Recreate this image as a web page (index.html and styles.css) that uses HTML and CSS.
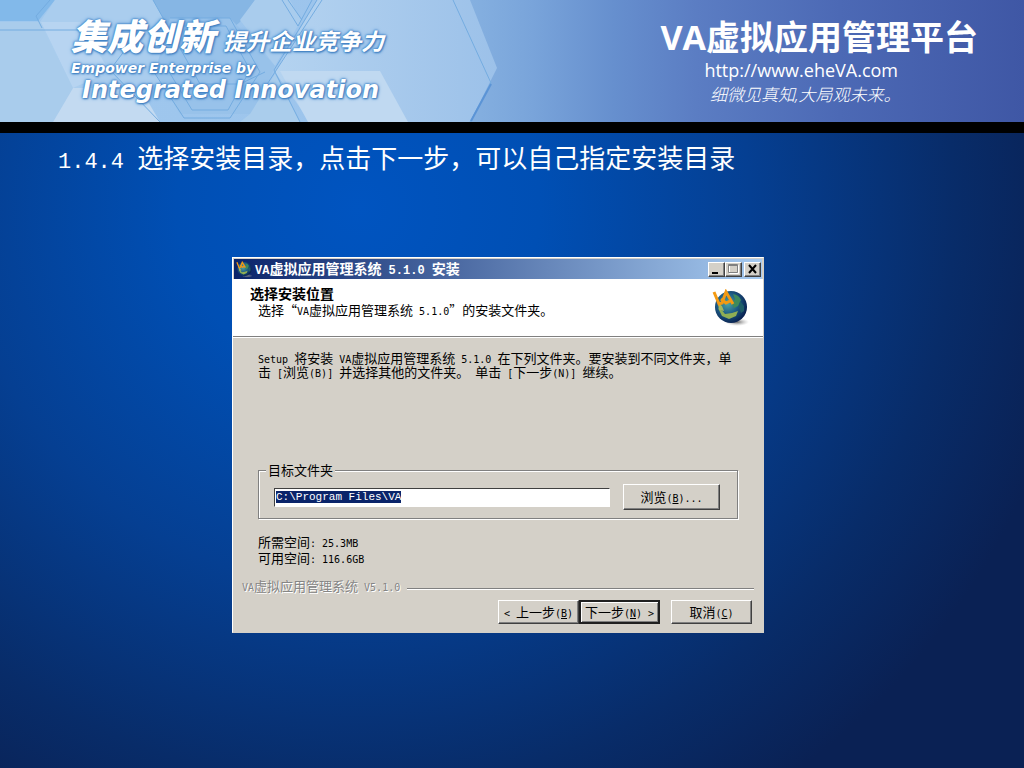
FILE: index.html
```html
<!DOCTYPE html>
<html lang="zh-CN">
<head>
  <meta charset="UTF-8">
  <title>VA虚拟应用管理平台</title>
  <link rel="stylesheet" href="styles.css">
</head>
<body>
<header>
  <svg class="hexes" width="520" height="122" viewBox="0 0 520 122" aria-hidden="true">
    <defs>
      <linearGradient id="fade" x1="0" x2="1">
        <stop offset="0" stop-color="#b4d3f0"/>
        <stop offset="1" stop-color="#9cc1e9"/>
      </linearGradient>
    </defs>
    <path d="M0 0H55L38 21H0z" fill="#82b9ea"/>
    <path d="M0 22H41L73 88L53 122H0z" fill="#a9ccec"/>
    <path d="M55 0H153L181 50L160 88H73L40 22z" fill="#aacdee"/>
    <path d="M0 22H80L110 72L73 88L41 22z" fill="#c3dbf3" opacity=".5"/>
    <path d="M153 0H255L240 22L206 50H181z" fill="#86b6e4"/>
    <path d="M255 0H290L301 20L275 66L240 20z" fill="#a9cced"/>
    <path d="M317 0H470L497 68L470 122H310L275 72z" fill="url(#fade)"/>
    <path d="M170 18H230L275 66L255 114H180L155 72z" fill="#98c2ea"/>
    <path d="M73 88H140L160 122H53z" fill="#c3daf1"/>
    <path d="M280 71H380L408 122H308z" fill="#c0d9f1"/>
    <path d="M250 114L275 74L300 122H240z" fill="#aacdec"/>
    <g fill="none" stroke="#74ace0">
      <path d="M50 0L36 16L42 28M0 30H80"/>
      <path d="M153 0L200 84M170 18H230L260 72L230 118H184L150 66"/>
      <path d="M182 26H226L250 70L228 110H192L168 70"/>
      <path d="M282 0L298 26L312 0M288 0L302 20M322 0L262 92M317 0L274 70L300 122"/>
      <path d="M140 30L110 70L160 122M200 84H240L265 72"/>
      <path d="M453 0L491 83L470 122"/>
    </g>
    <path d="M491 84L471 121" stroke="#5b94d6" stroke-width="2"/>
  </svg>
  <div class="slogan">
    <div class="cn"><span class="big">集成创新</span><span class="small">提升企业竞争力</span></div>
    <div class="en1">Empower Enterprise by</div>
    <div class="en2">Integrated Innovation</div>
  </div>
  <div class="brand">
    <div class="name">VA虚拟应用管理平台</div>
    <a href="#">http://www.eheVA.com</a>
    <div class="motto">细微见真知,大局观未来。</div>
  </div>
</header>

<main>
  <h1><span class="num">1.4.4 </span>选择安装目录，点击下一步，可以自己指定安装目录</h1>

  <div class="window">
    <div class="titlebar">
      <svg class="icon" viewBox="0 0 38 38" aria-hidden="true"><use href="#globe"/></svg>
      <span class="title"><span class="m">VA</span>虚拟应用管理系统<span class="m"> 5.1.0 </span>安装</span>
      <button class="wb" aria-label="最小化"><svg width="11" height="10"><path d="M1 8h6v2H1z"/></svg></button>
      <button class="wb" aria-label="最大化" disabled><svg width="11" height="10" fill="none"><path d="M1.5 1.5h9v8h-9z" stroke="#fff"/><path d="M.5.5h9v8h-9zM.5 1.5h9" stroke="#808080"/></svg></button>
      <button class="wb close" aria-label="关闭"><svg width="11" height="10"><path d="M2 1L9 9M9 1L2 9" stroke="#000" stroke-width="2"/></svg></button>
    </div>

    <div class="head">
      <div>
        <h2>选择安装位置</h2>
        <p>选择“<span class="m">VA</span>虚拟应用管理系统<span class="m"> 5.1.0</span>”的安装文件夹。</p>
      </div>
      <svg class="logo" width="38" height="38" viewBox="0 0 38 38" aria-hidden="true">
        <defs>
          <radialGradient id="sea" cx=".4" cy=".4" r=".65">
            <stop offset="0" stop-color="#4fa5a2"/>
            <stop offset=".5" stop-color="#1d5c86"/>
            <stop offset="1" stop-color="#071c4c"/>
          </radialGradient>
          <radialGradient id="shade">
            <stop offset="0" stop-color="#666"/>
            <stop offset="1" stop-color="#bbb" stop-opacity="0"/>
          </radialGradient>
        </defs>
        <g id="globe">
          <ellipse cx="25" cy="33" rx="12" ry="4" fill="url(#shade)"/>
          <circle cx="19" cy="18" r="16" fill="url(#sea)"/>
          <path d="M21 5q6 1 8 6l-3 6-4 2-2-4 3-5z" fill="#3d8a5c"/>
          <path d="M6 19q4 2 7 6l7-1 6-2-2 5-7 3-7-3z" fill="#8fae54"/>
          <path d="M6 14l4 3 2 5-5-1z" fill="#a3b85c"/>
          <path d="M28 12l4 5v5l-3 2-2-5z" fill="#1f5f68"/>
          <path d="M2 3L7 15L10 14L14 3L21 15M9 10L14 14L18 12" fill="none" stroke="#f39a13" stroke-width="3"/>
        </g>
      </svg>
    </div>

    <div class="page">
      <p class="info"><span class="m">Setup </span>将安装<span class="m"> VA</span>虚拟应用管理系统<span class="m"> 5.1.0 </span>在下列文件夹。要安装到不同文件夹，单<br>击<span class="m"> [</span>浏览<span class="m">(B)] </span>并选择其他的文件夹。<span class="m"> </span>单击<span class="m"> [</span>下一步<span class="m">(N)] </span>继续。</p>

      <fieldset>
        <legend><label for="path">目标文件夹</label></legend>
        <input id="path" type="text" value="C:\Program Files\VA">
        <button class="btn">浏览<span class="m">(<u>B</u>)...</span></button>
      </fieldset>

      <div class="space">
        所需空间<span class="m">: 25.3MB</span><br>
        可用空间<span class="m">: 116.6GB</span>
      </div>
    </div>

    <div class="version"><span><span class="m">VA</span>虚拟应用管理系统<span class="m"> V5.1.0</span></span></div>
    <div class="buttons">
      <button class="btn"><span class="m">&lt; </span>上一步<span class="m">(<u>B</u>)</span></button>
      <button class="btn next">下一步<span class="m">(<u>N</u>) &gt;</span></button>
      <button class="btn cancel">取消<span class="m">(<u>C</u>)</span></button>
    </div>
  </div>
</main>

<script>
  const path = document.getElementById("path");
  path.focus();
  path.select();
</script>
</body>
</html>
```
FILE: styles.css
```css
* {
  box-sizing: border-box;
}
body {
  margin: 0;
  min-height: 100vh;
  display: flex;
  flex-direction: column;
  font-family: "Noto Sans CJK SC", sans-serif;
  background: radial-gradient(ellipse 71% 92% at 35% 27%, #0054c0 0%, #004fb4 25%, #053f92 54%, #082c69 82%, #0a2154 100%);
}
h1, h2, p {
  margin: 0;
}

/* banner */
header {
  position: relative;
  display: flex;
  justify-content: space-between;
  height: 133px;
  border-bottom: 11px solid #000;
  color: white;
  background: linear-gradient(90deg, #a0c8ee 0%, #9cc4ec 36%, #85b0e0 46%, #79a4da 52%, #668fce 60%, #5b7dc3 68%, #4c69b5 82%, #3f57a5 100%);
}
.hexes {
  position: absolute;
  left: 0;
  top: 0;
}
.slogan {
  position: relative;
  padding: 12px 0 0 71px;
  font-style: italic;
  font-weight: bold;
  white-space: nowrap;
  text-shadow: 0 0 2px #3f82c6, 0 0 2px #3f82c6, 1px 1px 2px #3f7dbd, 0 0 4px #5d9ad8;
}
.slogan .cn {
  display: flex;
  align-items: baseline;
  gap: 8px;
  height: 47px;
  line-height: 44px;
}
.big {
  font-size: 36px;
  font-weight: 900;
}
.small {
  font-size: 23px;
}
.en1, .en2 {
  font-family: "DejaVu Sans", sans-serif;
}
.en1 {
  font-size: 14px;
  line-height: 18px;
}
.en2 {
  padding-left: 11px;
  font-size: 24px;
  line-height: 26px;
}
.brand {
  position: relative;
  display: flex;
  flex-direction: column;
  align-items: center;
  padding: 16px 46px 0 0;
  font-family: "Open Sans", "Noto Sans CJK SC", sans-serif;
}
.name {
  font-size: 34px;
  line-height: 42px;
  font-weight: bold;
}
.brand a {
  margin-right: 36px;
  font-size: 18px;
  line-height: 24px;
  color: white;
  text-decoration: none;
}
.motto {
  margin-right: 28px;
  font-size: 17px;
  line-height: 26px;
  font-style: italic;
  font-weight: 300;
}

main {
  padding: 8px 28px 40px 0;
}
h1 {
  padding-left: 58px;
  font-size: 26px;
  line-height: 32px;
  font-weight: 400;
  color: white;
}
.num {
  font-family: "Liberation Mono", monospace;
  font-size: 22px;
  line-height: 1;
  white-space: pre;
}

/* installer window */
.window {
  width: 532px;
  margin: 83px auto 0;
  padding-bottom: 8px;
  border: 1px solid #d4d0c8;
  border-top-color: white;
  border-left-color: white;
  background: #d4d0c8;
  color: black;
  font-size: 13px;
  line-height: 16px;
}
.m {
  font-family: "DejaVu Sans Mono", monospace;
  font-size: 10px;
  line-height: 1;
  white-space: pre;
}
.titlebar {
  display: flex;
  align-items: center;
  height: 20px;
  margin: 1px 1px 0;
  padding: 0 1px 0 2px;
  background: linear-gradient(90deg, #0a246a, #a6caf0);
  color: white;
}
.icon {
  width: 17px;
  height: 17px;
}
.title {
  flex: 1;
  padding: 0 0 2px 2px;
  font-size: 14px;
  font-weight: bold;
}
.title .m {
  font-family: "Liberation Mono", monospace;
  font-size: 12px;
}
button {
  color: black;
  font-family: inherit;
  background: #d4d0c8;
  border: 1px solid;
  border-color: white #404040 #404040 white;
  box-shadow: inset -1px -1px #808080;
}
.wb {
  display: flex;
  align-items: center;
  justify-content: center;
  width: 17px;
  height: 15px;
  padding: 0 2px 1px 1px;
}
.close {
  margin-left: 2px;
}
.head {
  display: flex;
  justify-content: space-between;
  height: 58px;
  padding: 6px 13px 0 17px;
  background: white;
  border-bottom: 1px solid #808080;
}
.head h2 {
  font-size: 14px;
  line-height: 16px;
}
.head p {
  padding-left: 8px;
  line-height: 18px;
}
.logo {
  margin-top: 4px;
}
.page {
  padding: 13px 25px 0;
  border-top: 1px solid white;
}
.info {
  height: 111px;
  line-height: 13px;
  white-space: nowrap;
}
fieldset {
  display: flex;
  align-items: center;
  justify-content: space-between;
  height: 57px;
  margin: 0;
  padding: 0 17px 2px 15px;
  border: 1px solid #808080;
  box-shadow: 1px 1px white, inset 1px 1px white;
}
legend {
  margin-left: -8px;
  padding: 0 2px;
  background: #d4d0c8;
}
input {
  width: 336px;
  height: 19px;
  padding: 0 1px;
  border: 1px solid;
  border-color: #404040 white white #404040;
  outline: none;
  background: white;
  font-family: "Liberation Mono", monospace;
  font-size: 11px;
}
input::selection {
  background: #0a246a;
  color: white;
}
.btn {
  width: 81px;
  height: 24px;
  padding: 0;
  font-size: 13px;
  line-height: 16px;
  white-space: nowrap;
}
fieldset .btn {
  width: 97px;
  height: 26px;
}
.space {
  padding-top: 15px;
}
.version {
  display: flex;
  align-items: center;
  gap: 7px;
  margin-top: 12px;
  padding: 0 9px;
  color: #858585;
  text-shadow: 1px 1px white;
}
.version::after {
  content: "";
  flex: 1;
  margin-top: 6px;
  border-top: 1px solid #808080;
  border-bottom: 1px solid white;
}
.buttons {
  display: flex;
  justify-content: flex-end;
  margin-top: 6px;
  padding-right: 11px;
}
.next {
  border: 2px solid #202020;
  box-shadow: inset 1px 1px white, inset -1px -1px #808080;
}
.cancel {
  margin-left: 11px;
}
```
